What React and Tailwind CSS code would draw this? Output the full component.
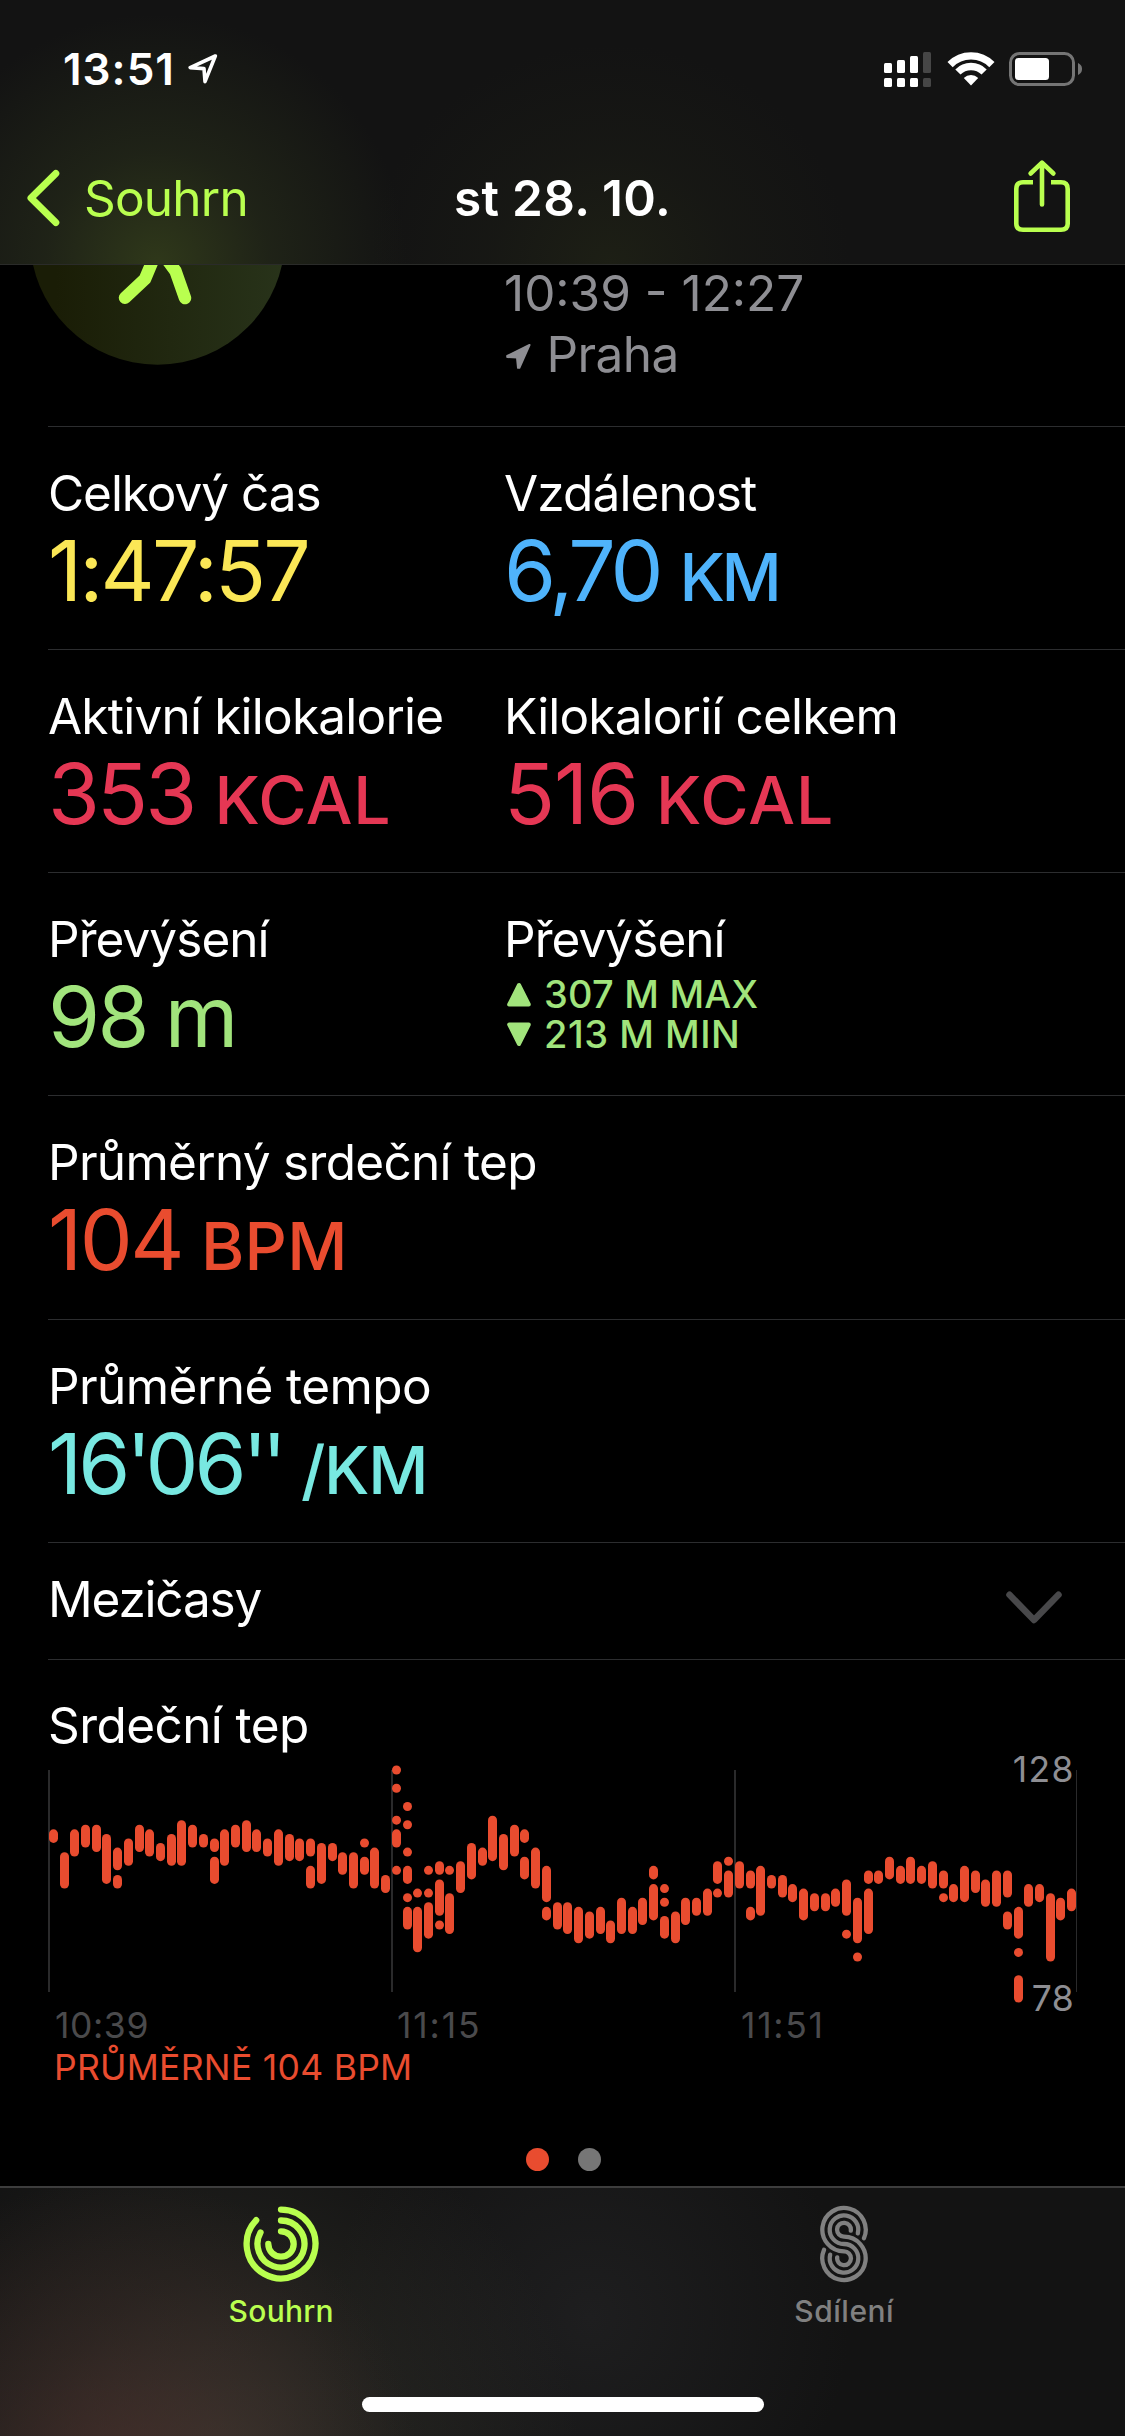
const metrics = [
  [
    { label: 'Celkový čas', labelClass: 'tracking-[-1.05px]', value: '1:47:57', color: 'text-[#fbe756]', valueClass: 'tracking-[-2.9px]' },
    { label: 'Vzdálenost', labelClass: 'tracking-[-0.85px]', value: '6,70', unit: 'KM', color: 'text-[#4fb3fb]', valueClass: 'tracking-[-4px]', unitClass: 'ml-[20px] tracking-[-3.5px]' },
  ],
  [
    { label: 'Aktivní kilokalorie', labelClass: 'tracking-[-0.78px]', value: '353', unit: 'KCAL', color: 'text-[#e53754]', valueClass: 'tracking-[-2.8px]', unitClass: 'ml-[20px] tracking-[0.7px]' },
    { label: 'Kilokalorií celkem', labelClass: 'tracking-[-0.84px]', value: '516', unit: 'KCAL', color: 'text-[#e53754]', valueClass: 'tracking-[-1.1px]', unitClass: 'ml-[18px] tracking-[1.1px]' },
  ],
  [
    { label: 'Převýšení', labelClass: 'tracking-[-0.95px]', value: '98', unit: 'm', color: 'text-[#a1e47c]', valueClass: 'tracking-[-2.6px]', bigUnit: true, unitClass: 'ml-[18px]' },
    { label: 'Převýšení', labelClass: 'tracking-[-0.95px]', range: true },
  ],
  [
    { label: 'Průměrný srdeční tep', labelClass: 'tracking-[-0.7px]', value: '104', unit: 'BPM', color: 'text-[#e94c2f]', valueClass: 'tracking-[-2.5px]', unitClass: 'ml-[19px] tracking-[0.3px]' },
  ],
  [
    { label: 'Průměrné tempo', labelClass: 'tracking-[-0.57px]', value: "16'06''", unit: '/KM', color: 'text-[#78e8e1]', valueClass: 'tracking-[-4px]', unitClass: 'ml-[20px] tracking-[-1.2px]' },
  ],
];

const rowHeights = ['h-[223px]', 'h-[223px]', 'h-[223px]', 'h-[224px]', 'h-[223px]'];

// one entry per time slot, each holding [max, min] BPM ranges
const heartRate = [
  [[114, 113]], [[109, 103]], [[114, 110]], [[115, 112]], [[115, 111]], [[113, 104]],
  [[110, 107], [104, 103]], [[112, 108]], [[115, 111]], [[114, 110]], [[111, 109]], [[113, 108]],
  [[116, 108]], [[115, 112]], [[113, 112]], [[112, 111], [108, 104]], [[114, 108]], [[115, 112]],
  [[116, 111]], [[114, 111]], [[112, 110]], [[114, 108]], [[113, 109]], [[112, 109]],
  [[112, 110], [106, 103]], [[111, 104]], [[111, 109]], [[109, 106]], [[109, 103]],
  [[112, 112], [108, 106]], [[110, 103]], [[104, 102]],
  [[128, 128], [124, 124], [117, 117], [114, 112], [106, 106]],
  [[120, 120], [116, 116], [110, 110], [106, 104], [100, 100], [97, 94]],
  [[101, 101], [97, 89]], [[106, 106], [101, 101], [98, 92]], [[107, 106], [103, 97], [94, 94]],
  [[106, 106], [100, 93]], [[107, 102]], [[111, 105]], [[110, 108]], [[117, 109]], [[113, 107]],
  [[115, 110]], [[114, 113], [108, 105]], [[110, 103]], [[106, 100], [97, 96]], [[98, 94]],
  [[98, 93]], [[97, 91]], [[96, 92]], [[97, 93]], [[94, 91]], [[99, 93]], [[97, 93]], [[99, 95]],
  [[106, 105], [102, 96]], [[102, 102], [99, 99], [95, 92]], [[96, 91]], [[99, 95]], [[99, 97]],
  [[101, 97]], [[107, 104], [101, 101]], [[108, 108], [105, 101]], [[107, 103]],
  [[105, 103], [97, 96]], [[106, 97]], [[104, 103]], [[104, 101]], [[102, 100]], [[101, 96]],
  [[100, 98]], [[100, 98]], [[101, 99]], [[103, 97], [92, 92]], [[99, 91], [87, 87]],
  [[105, 104], [101, 93]], [[105, 104]], [[108, 105]], [[106, 104]], [[108, 104]], [[106, 104]],
  [[107, 103]], [[105, 103], [100, 100]], [[102, 100]], [[106, 100]], [[105, 102]], [[103, 99]],
  [[105, 99]], [[105, 101], [96, 94]], [[97, 92], [88, 88], [82, 78]], [[102, 99]], [[102, 100]],
  [[100, 87]], [[99, 96]], [[101, 98]],
];

function StatusBar() {
  return (
    <div className="flex h-[132px] items-start justify-between pt-[39px] pl-[63px] pr-[43px] text-white">
      <div className="flex items-start">
        <span className="w-[125px] text-[44px] leading-[60px] font-semibold tracking-[1px]">13:51</span>
        <svg className="mt-[14px]" width="31" height="32" viewBox="0 0 31 32" fill="none" stroke="currentColor" strokeWidth="3.6" strokeLinejoin="round">
          <path d="M27.3 3 L2.2 14.6 L16 15.6 L17 28.6 Z" />
        </svg>
      </div>
      <svg className="mt-[12px]" width="198" height="37" viewBox="0 0 198 37" fill="currentColor">
        <rect x="0" y="12" width="8" height="10" rx="1.5" />
        <rect x="13" y="9" width="8" height="13" rx="1.5" />
        <rect x="26" y="5" width="8" height="17" rx="1.5" />
        <rect x="39" y="1" width="8" height="21" rx="1.5" fill="#464646" />
        <rect x="0" y="27" width="8" height="9" rx="1.5" />
        <rect x="13" y="27" width="8" height="9" rx="1.5" />
        <rect x="26" y="27" width="8" height="9" rx="1.5" />
        <rect x="39" y="27" width="8" height="9" rx="1.5" fill="#464646" />
        <g fill="none" stroke="currentColor" strokeWidth="7.3">
          <path d="M66.1 13.6 A29.3 29.3 0 0 1 107.9 13.6" />
          <path d="M73.9 21 A18.4 18.4 0 0 1 100.1 21" />
        </g>
        <path d="M79.8 27 A10.3 10.3 0 0 1 94.2 27 L87 34.4 Z" />
        <rect x="126.5" y="2.5" width="63" height="31" rx="9" fill="none" stroke="#757575" strokeWidth="3" />
        <rect x="131" y="7" width="34" height="22" rx="3.5" />
        <path d="M194 12 C197.6 13.6 198 16.5 198 18 C198 19.5 197.6 22.4 194 24 Z" fill="#757575" />
      </svg>
    </div>
  );
}

function NavBar() {
  return (
    <div className="grid h-[132px] grid-cols-3 items-center text-[49.5px] leading-[60px]">
      <div className="flex items-center pl-[26px] text-[#b9ff4f]">
        <svg width="36" height="60" viewBox="0 0 36 60" fill="none" stroke="currentColor" strokeWidth="7" strokeLinecap="round" strokeLinejoin="round">
          <path d="M29.8 5.5 L5 30 L29.8 54.5" />
        </svg>
        <span className="ml-[22px] tracking-[-0.8px]">Souhrn</span>
      </div>
      <h1 className="text-center font-semibold tracking-[0.33px] text-white">st 28. 10.</h1>
      <div className="flex justify-end pr-[52px] text-[#b9ff4f]">
        <svg className="-mt-[4px]" width="62" height="76" viewBox="0 0 62 76" fill="none" stroke="currentColor" strokeWidth="4.6">
          <path d="M22 24.3 H12 Q5.3 24.3 5.3 31 V65.7 Q5.3 71.7 12 71.7 H50 Q56.7 71.7 56.7 65.7 V31 Q56.7 24.3 50 24.3 H40" />
          <path d="M31 46.5 V5.5 M19.6 15.5 L31 4.6 L42.4 15.5" strokeLinecap="round" strokeLinejoin="round" />
        </svg>
      </div>
    </div>
  );
}

function WorkoutHeader() {
  return (
    <section className="flex h-[162px]">
      <svg className="ml-[30px]" width="255" height="101" viewBox="30 265 255 101">
        <defs>
          <linearGradient id="badge" x1="0" x2="1" y1="0" y2="0">
            <stop offset="0.1" stopColor="#1a1d06" />
            <stop offset="1" stopColor="#28331a" />
          </linearGradient>
        </defs>
        <circle cx="157.5" cy="237.2" r="127.5" fill="url(#badge)" />
        <g fill="none" stroke="#b9ff4f" strokeWidth="12.5" strokeLinecap="round" strokeLinejoin="round">
          <path d="M153 260 L145 279 L125 297.8" />
          <path d="M163 254 L175.5 271 L185 298" />
        </g>
      </svg>
      <div className="ml-[219px] text-[49.5px] leading-[60px] text-[#8e8e93]">
        <p className="-mt-[2px]">10:39 - 12:27</p>
        <p className="mt-px flex items-start">
          <svg className="mt-[19px] ml-[2px]" width="26" height="28" viewBox="0 0 26 28" fill="currentColor" stroke="currentColor" strokeWidth="2" strokeLinejoin="round">
            <path d="M23.5 2 L1.2 13 L1.2 14 L11 14.6 L12 24.8 L13.4 24.8 Z" />
          </svg>
          <span className="ml-[14.5px] tracking-[-0.6px]">Praha</span>
        </p>
      </div>
    </section>
  );
}

function ElevationRange() {
  return (
    <div className="mt-[6px] text-[38px] leading-[39.5px] font-medium text-[#a1e47c]">
      <div className="flex items-center">
        <svg className="ml-[3px]" width="24" height="25" viewBox="0 0 24 25" fill="currentColor" stroke="currentColor" strokeWidth="4" strokeLinejoin="round">
          <path d="M12 3 L2.2 22.5 H21.8 Z" />
        </svg>
        <span className="ml-[13px] tracking-[0.2px]">307 M MAX</span>
      </div>
      <div className="flex items-center">
        <svg className="ml-[3px]" width="24" height="25" viewBox="0 0 24 25" fill="currentColor" stroke="currentColor" strokeWidth="4" strokeLinejoin="round">
          <path d="M12 22 L2.2 2.5 H21.8 Z" />
        </svg>
        <span className="ml-[13px] tracking-[0.5px]">213 M MIN</span>
      </div>
    </div>
  );
}

// the minute and second marks sit tighter than the digits
function Value({ text }) {
  return text.split(/('+)/).map((part, i) =>
    part.startsWith("'") ? <span key={i} className="tracking-[-6px]">{part}</span> : part
  );
}

function Metric({ item }) {
  return (
    <div className="w-[456px] shrink-0">
      <div className={`text-[49.5px] leading-[60px] whitespace-nowrap text-white ${item.labelClass}`}>{item.label}</div>
      {item.range ? (
        <ElevationRange />
      ) : (
        <div className={`flex h-[96px] items-baseline leading-[96px] whitespace-nowrap ${item.color}`}>
          <span className={`text-[84px] ${item.valueClass}`}>
            <Value text={item.value} />
          </span>
          {item.unit && (
            <span className={`${item.bigUnit ? 'text-[84px]' : 'text-[66px] font-medium'} ${item.unitClass}`}>{item.unit}</span>
          )}
        </div>
      )}
    </div>
  );
}

function HeartRateChart() {
  return (
    <svg width="1077" height="330" viewBox="0 0 1077 330" className="overflow-visible font-[Inter]">
      <g fill="#2a2a2b">
        <rect x="0" y="10" width="2" height="222" />
        <rect x="343" y="10" width="2" height="222" />
        <rect x="686" y="10" width="2" height="222" />
        <rect x="1028" y="10" width="1" height="222" />
      </g>
      <g fill="#e94c2f">
        {heartRate.map((ranges, i) =>
          ranges.map(([max, min]) => (
            <rect key={`${i}-${max}`} x={Math.round(0.8 + i * 10.72)} y={5.5 + (128 - max) * 4.56} width="9" height={9 + (max - min) * 4.56} rx="4.5" />
          ))
        )}
      </g>
      <g fontSize="35.5" fill="#8e8e93">
        <text x="1027" y="22" textAnchor="end" letterSpacing="1.4">128</text>
        <text x="1026" y="251" textAnchor="end" letterSpacing="0.3">78</text>
      </g>
      <g fontSize="35.5" fill="#4a4a4c">
        <text x="7" y="278" letterSpacing="0.6">10:39</text>
        <text x="349" y="278" letterSpacing="1.86">11:15</text>
        <text x="693" y="278" letterSpacing="1.7">11:51</text>
      </g>
      <text x="6" y="320" fontSize="35.5" fill="#e94c2f" letterSpacing="0.28">PRŮMĚRNĚ 104 BPM</text>
    </svg>
  );
}

function TabBar() {
  return (
    <nav className="flex h-[250px] flex-col items-center border-t-2 border-[#3d3d3d] bg-[#131313] bg-[radial-gradient(circle_300px_at_120px_290px,#4e302caa,#4a302c55_45%,#4a302c00),radial-gradient(circle_360px_at_220px_270px,#3e3d34bb,#3a393055_50%,#3a393000),radial-gradient(circle_260px_at_590px_130px,#1e1e1f,#1d1d1e00)]">
      <div className="grid h-[209px] w-full grid-cols-2 text-[30px] leading-[40px] font-medium">
        <div className="flex flex-col items-center pt-[17px] text-[#b9ff4f]">
          <svg width="78" height="78" viewBox="-39 -39 78 78" fill="none" stroke="currentColor" strokeWidth="6.3" strokeLinecap="round">
            <path d="M0 -34.4 A34.4 34.4 0 1 1 -24.8 -23.8" />
            <path d="M0 -23.5 A23.5 23.5 0 1 1 -20.5 -11.5" />
            <path d="M0 -12.7 A12.7 12.7 0 1 1 -12.7 0" />
          </svg>
          <span className="mt-[8px] tracking-[0.3px]">Souhrn</span>
        </div>
        <div className="flex flex-col items-center pt-[17px] text-[#808080]">
          <svg width="48" height="78" viewBox="0 -0.7 48 78" fill="none" stroke="currentColor" strokeWidth="4.3" strokeLinecap="round">
            <path d="M44 32.5 A21.7 21.7 0 1 0 24 45.7 A6.9 6.9 0 1 1 17.2 51.6" />
            <path d="M37.8 27.7 A14.3 14.3 0 1 0 24 38.3 A14.3 14.3 0 1 1 10.2 48.9" />
            <path d="M30.8 25 A6.9 6.9 0 1 0 24 30.9 A21.7 21.7 0 1 1 4 44.1" />
          </svg>
          <span className="mt-[8px] ml-px tracking-[0.5px]">Sdílení</span>
        </div>
      </div>
      <div className="h-[15px] w-[402px] rounded-full bg-white" />
    </nav>
  );
}

export default function App() {
  return (
    <div className="flex h-[2436px] w-[1125px] flex-col overflow-hidden bg-black font-[Inter,sans-serif]">
      <header className="h-[265px] shrink-0 border-b border-[#2a2b29] bg-[#131313] bg-[radial-gradient(ellipse_250px_250px_at_157px_264px,#2f381a,#272d1a99_45%,#1e201700),radial-gradient(ellipse_240px_220px_at_610px_264px,#1d1f15,#1a1b1588_50%,#1d1f1500)]">
        <StatusBar />
        <NavBar />
      </header>
      <main className="flex grow flex-col">
        <WorkoutHeader />
        {metrics.map((row, i) => (
          <section key={i} className={`-mt-px mb-px ml-[48px] flex shrink-0 border-t border-[#2c2d2f] pt-[36px] ${rowHeights[i]}`}>
            {row.map((item, j) => (
              <Metric key={j} item={item} />
            ))}
          </section>
        ))}
        <section className="-mt-px ml-[48px] flex h-[118px] shrink-0 items-start justify-between border-y border-[#2c2d2f]">
          <span className="mt-[26px] text-[49.5px] leading-[60px] tracking-[-1.2px] text-white">Mezičasy</span>
          <svg className="mt-[47px] mr-[62px]" width="58" height="36" viewBox="0 0 58 36" fill="none" stroke="#48484a" strokeWidth="6.5" strokeLinecap="round" strokeLinejoin="round">
            <path d="M4.5 4.8 L29 30 L53.5 4.8" />
          </svg>
        </section>
        <section className="ml-[48px] flex flex-col pt-[35px]">
          <h2 className="h-[65px] text-[49.5px] leading-[60px] tracking-[-0.57px] text-white">Srdeční tep</h2>
          <HeartRateChart />
          <div className="mt-[58px] flex gap-[29px] self-start pl-[478px]">
            <span className="size-[23px] rounded-full bg-[#e94c2f]" />
            <span className="size-[23px] rounded-full bg-[#767676]" />
          </div>
        </section>
      </main>
      <TabBar />
    </div>
  );
}
